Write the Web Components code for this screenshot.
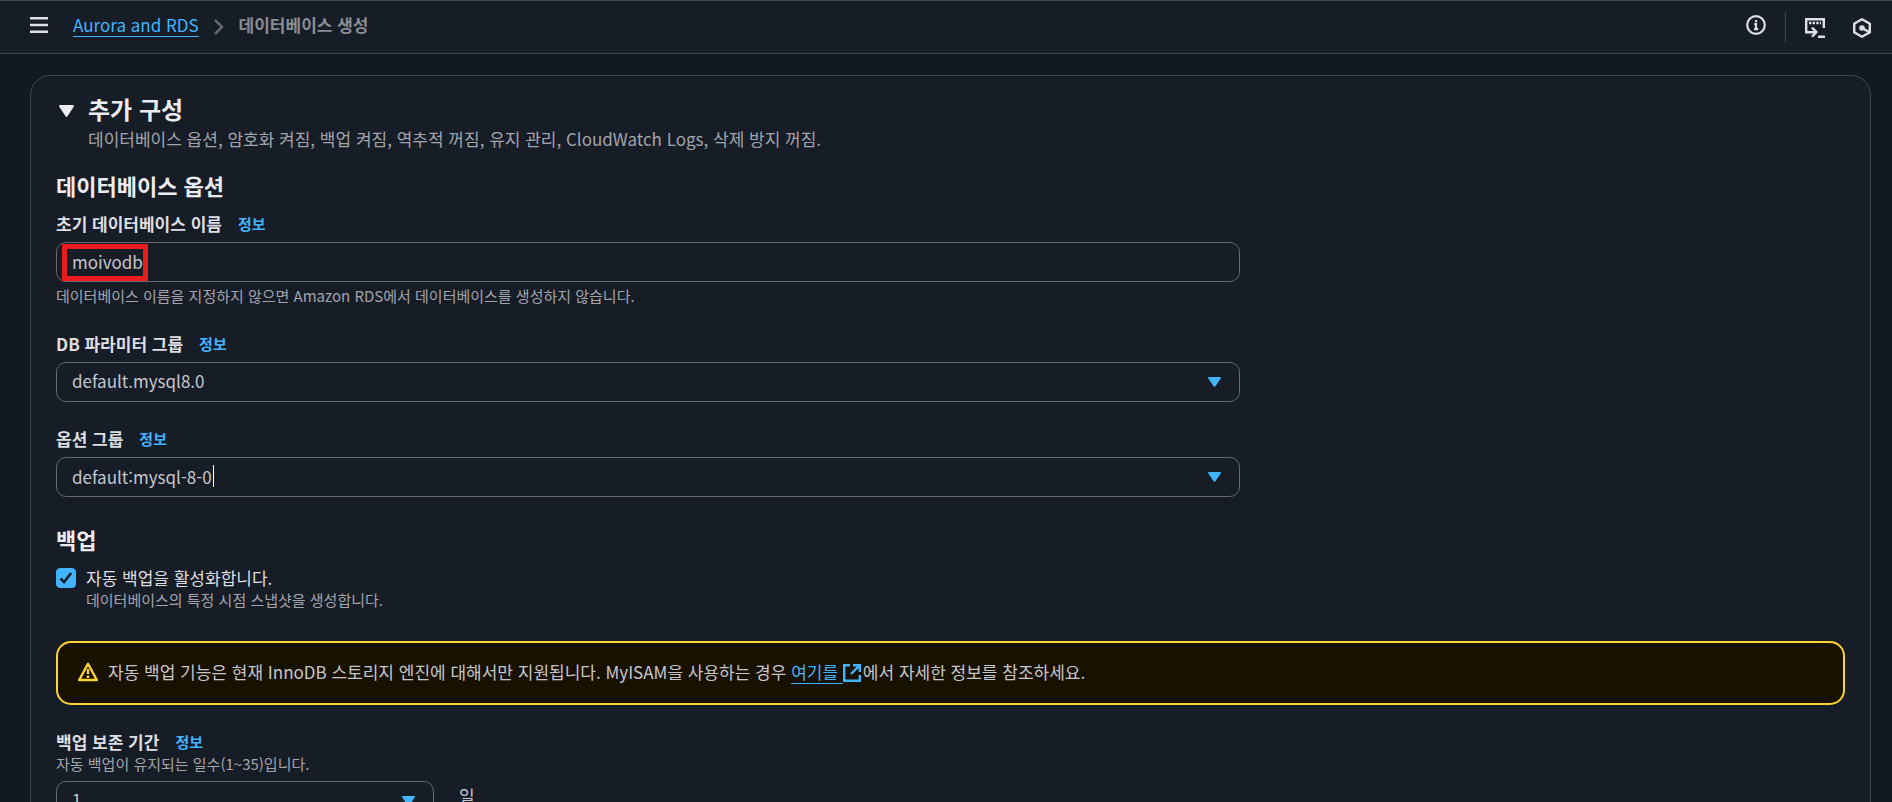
<!DOCTYPE html>
<html lang="ko">
<head>
<meta charset="utf-8">
<meta name="viewport" content="width=device-width, initial-scale=1">
<title>데이터베이스 생성 - Aurora and RDS</title>
<style>
  :root {
    --page: #131920;
    --surface: #161d26;
    --line: #424650;
    --control-line: #656871;
    --heading: #ebebf0;
    --label: #dedee3;
    --text: #c6c6cd;
    --muted: #a4a4ad;
    --link: #42b4ff;
    --warn: #fbd332;
    --warn-bg: #191100;
  }
  html, body { height: 100%; margin: 0; }
  body {
    background: var(--page);
    color: var(--text);
    font: 17px/24px "Noto Sans CJK KR", "Noto Sans", sans-serif;
  }
</style>
</head>
<body>
<rds-app>
  <top-bar slot="bar"></top-bar>
  <expandable-panel heading="추가 구성" description="데이터베이스 옵션, 암호화 켜짐, 백업 켜짐, 역추적 꺼짐, 유지 관리, CloudWatch Logs, 삭제 방지 꺼짐.">
    <form-section heading="데이터베이스 옵션">
      <text-field label="초기 데이터베이스 이름" value="moivodb" hint="데이터베이스 이름을 지정하지 않으면 Amazon RDS에서 데이터베이스를 생성하지 않습니다." marked></text-field>
      <select-field label="DB 파라미터 그룹" value="default.mysql8.0"></select-field>
      <combo-field label="옵션 그룹" value="default:mysql-8-0"></combo-field>
    </form-section>
    <form-section heading="백업">
      <check-field label="자동 백업을 활성화합니다." description="데이터베이스의 특정 시점 스냅샷을 생성합니다."></check-field>
    </form-section>
    <alert-box>자동 백업 기능은 현재 InnoDB 스토리지 엔진에 대해서만 지원됩니다. MyISAM을 사용하는 경우 <external-link href="#myisam">여기를</external-link>에서 자세한 정보를 참조하세요.</alert-box>
    <select-field compact label="백업 보존 기간" description="자동 백업이 유지되는 일수(1~35)입니다." value="1" unit="일"></select-field>
  </expandable-panel>
</rds-app>

<script>
const define = (name, render) => customElements.define(name, class extends HTMLElement {
  connectedCallback() {
    if (this.shadowRoot) return;
    this.attachShadow({ mode: "open" }).innerHTML = render(this);
  }
});
const attr = (el, name) => el.getAttribute(name) || "";

const base = `*, *::before { box-sizing: border-box; } a { color: var(--link); }`;

const fieldStyles = `<style>${base}
  :host { display: grid; grid-template-columns: 2fr 1fr; gap: 13px; }
  .head { display: flex; align-items: center; gap: 16px; height: 24px; margin-bottom: 6px; }
  .head label { font-weight: 700; color: var(--label); }
  .head a { font-size: 15px; font-weight: 700; text-decoration: none; }
  .desc { margin: -6px 0 7px; font-size: 15px; line-height: 20px; color: var(--muted); }
  .box { position: relative; }
  input, select {
    display: block; width: 100%; height: 40px; padding: 0 15px 2px; margin: 0;
    border: 1px solid var(--control-line); border-radius: 10px;
    background: var(--surface); color: var(--text); font: inherit;
    appearance: none; outline: 0;
  }
  .arrow { position: absolute; right: 19px; top: 15px; width: 13px; height: 10px; pointer-events: none; fill: var(--link); }
  .hint { margin: 3px 0 0; font-size: 15px; line-height: 22px; color: var(--muted); }
</style>`;
const head = el => `<div class="head"><label for="control">${attr(el, "label")}</label><a href="#info">정보</a></div>`;
const arrow = `<svg class="arrow" viewBox="0 0 13 10" aria-hidden="true"><path d="M1 0h11q1.400 .4 .7 1.500L7.400 9.300q-.9 1.100-1.800 0L.3 1.500Q-.4.4 1 0z"/></svg>`;

define("rds-app", () => `<style>${base}
  :host { display: flex; flex-direction: column; height: 100vh; overflow: hidden; }
  main { flex: 1; min-height: 0; overflow-y: auto; scrollbar-width: none; padding: 21px 21px 40px 30px; }
</style><slot name="bar"></slot><main><slot></slot></main>`);

define("top-bar", () => `<style>${base}
  :host { display: block; }
  header {
    display: flex; align-items: center; justify-content: space-between; height: 54px;
    padding: 0 21px 4px 30px; box-sizing: border-box;
    background: var(--surface); border: 1px solid var(--line); border-width: 1px 0;
  }
  nav, .tools { display: flex; align-items: center; }
  button { display: flex; padding: 0; border: 0; background: none; color: #dedee3; }
  svg { display: block; fill: none; stroke: currentColor; }
  ol { display: flex; align-items: center; gap: 15px; margin: 0 0 0 25px; padding: 0; list-style: none; }
  li { display: flex; align-items: center; gap: 15px; }
  li svg { color: var(--control-line); margin-top: 4px; }
  li a { text-underline-offset: 4px; text-decoration-thickness: 1px; }
  li[aria-current] { font-weight: 700; color: #8c8c94; }
  .tools { align-self: stretch; }
  .rule { width: 1px; height: 31px; margin: 4px 19px 0; background: var(--line); }
  .low { margin-top: 6px; }
  .low + .low { margin-left: 28px; }
</style>
<header>
  <nav aria-label="이동 경로">
    <button aria-label="메뉴"><svg width="18" height="16" viewBox="0 0 18 16" stroke-width="2.500"><path d="M0 1.300h18M0 8h18M0 14.700h18"/></svg></button>
    <ol>
      <li><a href="#rds">Aurora and RDS</a><svg width="10" height="16" viewBox="0 0 10 16" stroke-width="2.500" aria-hidden="true"><path d="M1 1l7 7-7 7"/></svg></li>
      <li aria-current="page">데이터베이스 생성</li>
    </ol>
  </nav>
  <div class="tools">
    <button aria-label="정보"><svg width="20" height="20" viewBox="0 0 20 20" stroke-width="2.200"><circle cx="10" cy="10" r="8.800"/><path d="M8.200 9H10v5M8 14.200h4.200M9 6.200h2.200"/></svg></button>
    <span class="rule"></span>
    <button class="low" aria-label="CloudShell"><svg width="20" height="20" viewBox="0 0 20 20" stroke-width="2.400"><path d="M18.800 10V1.200H1.200v13H11M7 9.500l4.400 4.600L7 18.800M13 18.700h7"/><path d="M4 5h12" stroke-dasharray="2.400 1.200"/></svg></button>
    <button class="low" aria-label="도구"><svg width="18" height="20" viewBox="0 0 18 20" stroke-width="2.400"><path d="M9 1.300l7.800 4.400v8.600L9 18.700l-7.800-4.400V5.700z"/><circle cx="9" cy="10" r="2.800" fill="currentColor" stroke="none"/><path d="M9 10l7 4"/></svg></button>
  </div>
</header>`);

define("expandable-panel", el => `<style>${base}
  :host { display: block; background: var(--surface); border: 1px solid var(--line); border-radius: 20px; padding: 17px 25px 40px; }
  .top { display: flex; align-items: flex-start; padding-left: 3px; }
  button { display: flex; padding: 12px 14px 0 0; border: 0; background: none; }
  svg { display: block; fill: var(--heading); }
  h2 { margin: 0 0 2px; font-size: 24px; line-height: 32px; color: var(--heading); }
  p { margin: 0; color: var(--muted); }
  .body { display: flex; flex-direction: column; gap: 25px; margin-top: 20px; }
  ::slotted(form-section:not(:first-child)) { margin-top: 3px; }
  ::slotted(alert-box) { margin-top: 6px; }
</style>
<div class="top">
  <button aria-label="접기" aria-expanded="true"><svg width="15" height="12" viewBox="0 0 15 12"><path d="M1 0h13q1.500.4.7 1.700L8.500 11.300q-1 1.200-2 0L.3 1.700Q-.5.4 1 0z"/></svg></button>
  <div><h2>${attr(el, "heading")}</h2><p>${attr(el, "description")}</p></div>
</div>
<div class="body"><slot></slot></div>`);

define("form-section", el => `<style>${base}
  :host { display: block; }
  h3 { margin: 0 0 13px; font-size: 22px; line-height: 28px; color: var(--heading); }
  .fields { display: flex; flex-direction: column; gap: 25px; }
</style><h3>${attr(el, "heading")}</h3><div class="fields"><slot></slot></div>`);

define("text-field", el => `${fieldStyles}<style>
  .mark { position: absolute; left: 6px; top: 2px; width: 86px; height: 37px; border: 5px solid #e71d1d; pointer-events: none; }
</style>
<div>${head(el)}<div class="box"><input id="control" type="text" value="${attr(el, "value")}">${el.hasAttribute("marked") ? '<span class="mark"></span>' : ""}</div>
<p class="hint">${attr(el, "hint")}</p></div>`);

define("select-field", el => `${fieldStyles}<style>
  :host([compact]) { display: block; }
  .row { display: flex; gap: 25px; }
  :host([compact]) .box { flex: 0 0 378px; }
  :host(:not([compact])) .box { flex: 1; }
  .unit { padding-top: 3px; }
</style>
<div>${head(el)}${el.hasAttribute("description") ? `<p class="desc">${attr(el, "description")}</p>` : ""}
<div class="row"><div class="box"><select id="control"><option>${attr(el, "value")}</option></select>${arrow}</div>${el.hasAttribute("unit") ? `<span class="unit">${attr(el, "unit")}</span>` : ""}</div></div>`);

define("combo-field", el => `${fieldStyles}<style>
  .caret { position: absolute; left: 157px; top: 8px; width: 1px; height: 22px; background: #fff; }
</style>
<div>${head(el)}<div class="box"><input id="control" type="text" role="combobox" aria-expanded="false" value="${attr(el, "value")}"><span class="caret"></span>${arrow}</div></div>`);

define("check-field", el => `<style>${base}
  :host { display: grid; grid-template-columns: 20px 1fr; column-gap: 10px; }
  .tick { position: relative; height: 20px; margin-top: 2px; }
  input { display: block; width: 20px; height: 20px; margin: 0; appearance: none; border-radius: 4px; border: 1px solid var(--control-line); }
  input:checked { background: var(--link); border-color: var(--link); }
  svg { position: absolute; inset: 0; pointer-events: none; fill: none; stroke: #161d26; stroke-width: 2.500; visibility: hidden; }
  input:checked + svg { visibility: visible; }
  label { color: var(--label); }
  p { grid-column: 2; margin: 0; font-size: 15px; line-height: 20px; color: var(--muted); }
</style>
<span class="tick"><input id="control" type="checkbox" checked><svg width="20" height="20" viewBox="0 0 20 20" aria-hidden="true"><path d="M4.500 10.500l3.600 3.600 7-9"/></svg></span>
<label for="control">${attr(el, "label")}</label>
<p>${attr(el, "description")}</p>`);

define("alert-box", () => `<style>${base}
  :host { display: flex; align-items: center; gap: 10px; min-height: 64px; padding: 10px 20px 12px; box-sizing: border-box; border: 2px solid var(--warn); border-radius: 15px; background: var(--warn-bg); }
  svg { flex: none; fill: none; stroke: var(--warn); stroke-width: 2.400; }
</style>
<svg width="20" height="20" viewBox="0 0 20 20" aria-hidden="true"><path stroke-linejoin="round" d="M10 1.800L18.800 18H1.200z"/><path d="M10 7v5M10 13.500v2.400"/></svg>
<div role="alert"><slot></slot></div>`);

define("external-link", el => `<style>${base}
  :host { display: inline; }
  a { text-decoration: none; }
  span { text-decoration: underline; text-underline-offset: 4px; text-decoration-thickness: 1px; white-space: pre; }
  svg { width: 18px; height: 18px; vertical-align: -3px; margin-right: 2px; fill: none; stroke: currentColor; stroke-width: 2.400; }
</style><a href="${attr(el, "href")}"><span><slot></slot> </span><svg viewBox="0 0 18 18" aria-label="외부 링크"><path d="M7 1.200H1.200v15.600h15.600V11M10 1.200h6.800V8M16.800 1.200L8 10"/></svg></a>`);
</script>
</body>
</html>
